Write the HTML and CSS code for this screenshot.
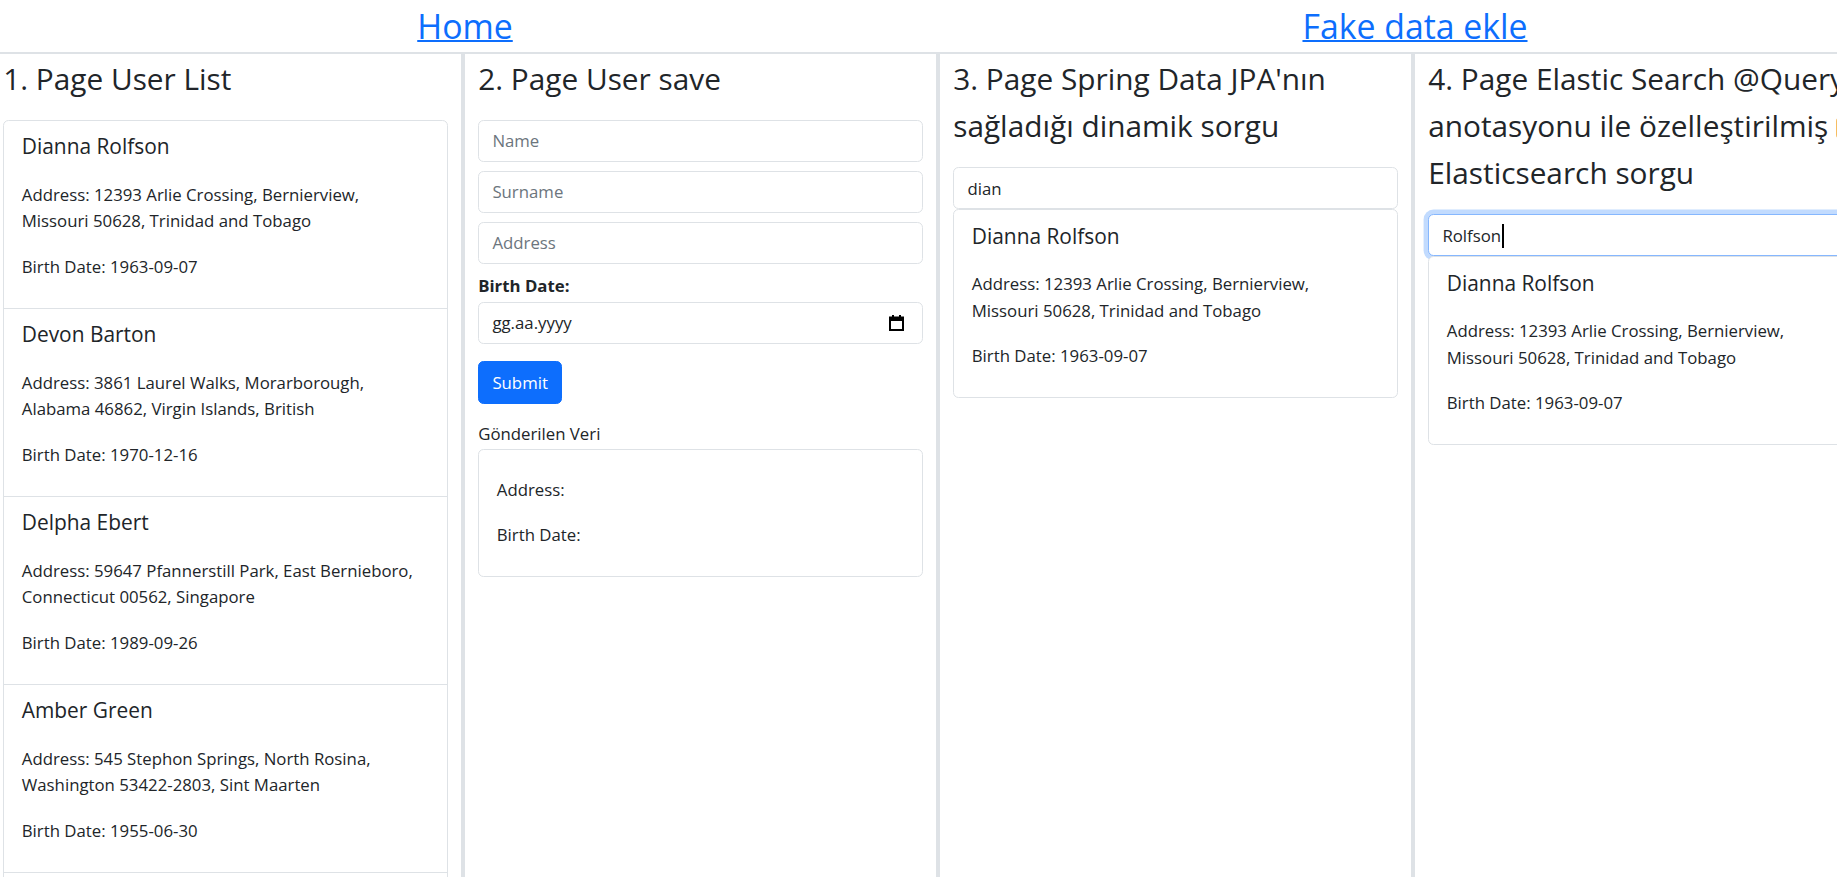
FILE: index.html
```html
<!DOCTYPE html>
<html lang="tr">
<head>
<meta charset="utf-8">
<title>Users</title>
<link rel="stylesheet" href="styles.css">
</head>
<body>
<div class="page">
  <nav class="topnav">
    <div class="topnav-cell"><a href="#" class="topnav-link">Home</a></div>
    <div class="topnav-cell"><a href="#" class="topnav-link">Fake data ekle</a></div>
  </nav>

  <main class="columns">
    <section class="col">
      <p class="col-title">1. Page User List</p>
      <div class="card">
        <div class="item">
          <h5 class="item-name">Dianna Rolfson</h5>
          <p class="item-text">Address: 12393 Arlie Crossing, Bernierview,<br>Missouri 50628, Trinidad and Tobago</p>
          <p class="item-text">Birth Date: 1963-09-07</p>
        </div>
        <div class="item">
          <h5 class="item-name">Devon Barton</h5>
          <p class="item-text">Address: 3861 Laurel Walks, Morarborough,<br>Alabama 46862, Virgin Islands, British</p>
          <p class="item-text">Birth Date: 1970-12-16</p>
        </div>
        <div class="item">
          <h5 class="item-name">Delpha Ebert</h5>
          <p class="item-text">Address: 59647 Pfannerstill Park, East Bernieboro,<br>Connecticut 00562, Singapore</p>
          <p class="item-text">Birth Date: 1989-09-26</p>
        </div>
        <div class="item">
          <h5 class="item-name">Amber Green</h5>
          <p class="item-text">Address: 545 Stephon Springs, North Rosina,<br>Washington 53422-2803, Sint Maarten</p>
          <p class="item-text">Birth Date: 1955-06-30</p>
        </div>
        <div class="item item-more" aria-hidden="true"></div>
      </div>
    </section>

    <section class="col">
      <p class="col-title">2. Page User save</p>
      <form class="save-form">
        <input class="field" type="text" placeholder="Name">
        <input class="field" type="text" placeholder="Surname">
        <input class="field" type="text" placeholder="Address">
        <label class="field-label">Birth Date:</label>
        <div class="field date-field">
          <span class="date-text">gg.aa.yyyy</span>
          <svg class="cal-icon" width="15" height="16" viewBox="0 0 15 16" aria-hidden="true">
            <rect x="3" y="0" width="2" height="3" fill="#000"/>
            <rect x="10" y="0" width="2" height="3" fill="#000"/>
            <rect x="1" y="2.5" width="13" height="12.5" fill="none" stroke="#000" stroke-width="2"/>
            <rect x="1" y="2" width="13" height="4" fill="#000"/>
          </svg>
        </div>
        <div class="btn-row"><button type="button" class="btn">Submit</button></div>
      </form>
      <p class="sent-label">Gönderilen Veri</p>
      <div class="card sent-box">
        <p class="item-text">Address:</p>
        <p class="item-text">Birth Date:</p>
      </div>
    </section>

    <section class="col">
      <p class="col-title">3. Page Spring Data JPA'nın<br>sağladığı dinamik sorgu</p>
      <input class="field search" type="text" value="dian">
      <div class="card">
        <div class="item">
          <h5 class="item-name">Dianna Rolfson</h5>
          <p class="item-text">Address: 12393 Arlie Crossing, Bernierview,<br>Missouri 50628, Trinidad and Tobago</p>
          <p class="item-text">Birth Date: 1963-09-07</p>
        </div>
      </div>
    </section>

    <section class="col">
      <p class="col-title">4. Page Elastic Search @Query<br>anotasyonu ile özelleştirilmiş <span class="title-mark" aria-hidden="true"></span><br>Elasticsearch sorgu</p>
      <div class="field search is-focus" role="textbox">Rolfson<span class="caret"></span></div>
      <div class="card">
        <div class="item">
          <h5 class="item-name">Dianna Rolfson</h5>
          <p class="item-text">Address: 12393 Arlie Crossing, Bernierview,<br>Missouri 50628, Trinidad and Tobago</p>
          <p class="item-text">Birth Date: 1963-09-07</p>
        </div>
      </div>
    </section>
  </main>
</div>
</body>
</html>
```
FILE: styles.css
```css
html, body {
  margin: 0;
  padding: 0;
  overflow: hidden;
  background: #fff;
}

body {
  font-family: "Open Sans", "Noto Sans", sans-serif;
  font-size: 16.8px;
  line-height: 26.4px;
  color: #212529;
}

.page {
  width: 1900px;
  margin-left: -10px;
}

/* top navigation */
.topnav {
  display: grid;
  grid-template-columns: 1fr 1fr;
  height: 51px;
  padding-top: 1px;
  border-bottom: 2px solid #dee2e6;
  font-size: 33.8px;
  line-height: 51px;
}

.topnav-cell {
  text-align: center;
}

.topnav-link {
  color: #0d6efd;
  text-decoration: underline;
  text-decoration-thickness: 2px;
}

/* columns */
.columns {
  display: grid;
  grid-template-columns: repeat(4, 475px);
  height: 823px;
  overflow: hidden;
}

.col {
  box-sizing: border-box;
  padding: 1px 13.2px 0;
  border-right: 4px solid #dee2e6;
  min-width: 0;
}

.col-title {
  margin: 0 0 17.6px;
  font-size: 29.8px;
  line-height: 47.2px;
  font-weight: 400;
  white-space: nowrap;
}

.title-mark {
  display: inline-block;
  width: 30px;
  height: 20px;
  border-radius: 3px;
  background: #f6bd62;
  vertical-align: -1px;
}

/* cards / list items */
.card {
  border: 1px solid #dee2e6;
  border-radius: 5.5px;
  background: #fff;
}

.item {
  padding: 12.7px 17.6px 8.4px;
}

.item + .item {
  border-top: 1px solid #dee2e6;
}

.item-more {
  height: 160px;
}

.item-name {
  margin: 0 0 21.9px;
  font-size: 20.9px;
  line-height: 26.4px;
  font-weight: 400;
}

.item-text {
  margin: 0 0 19.2px;
  white-space: nowrap;
}

/* form */
.save-form {
  margin: 0;
}

.field {
  display: block;
  box-sizing: border-box;
  width: 100%;
  height: 42.2px;
  margin: 0 0 8.8px;
  padding: 6.6px 13.2px;
  border: 1px solid #dee2e6;
  border-radius: 5.5px;
  background: #fff;
  font-family: inherit;
  font-size: 16.8px;
  line-height: 27px;
  color: #212529;
  outline: none;
}

.field::placeholder {
  color: #6c757d;
  opacity: 1;
}

.field-label {
  display: block;
  margin-bottom: 2.4px;
  font-weight: 700;
}

.date-field {
  display: flex;
  align-items: center;
  justify-content: space-between;
  margin-bottom: 17.6px;
}

.cal-icon {
  margin-right: 5px;
  flex: none;
}

.btn-row {
  margin-bottom: 17.6px;
}

.btn {
  display: inline-block;
  box-sizing: border-box;
  height: 42.2px;
  padding: 6.6px 13.2px;
  border: 1px solid #0d6efd;
  border-radius: 5.5px;
  background: #0d6efd;
  color: #fff;
  font-family: inherit;
  font-size: 16.8px;
  line-height: 27px;
}

.sent-label {
  margin: 0 0 1.6px;
}

.sent-box {
  padding: 26.7px 17.6px 8.5px;
}

/* search inputs */
.search {
  margin-bottom: 0;
}

.is-focus {
  border-color: #86b7fe;
  box-shadow: 0 0 0 4.4px rgba(13, 110, 253, 0.25);
  white-space: nowrap;
}

.caret {
  display: inline-block;
  width: 2px;
  height: 24px;
  margin-left: 1px;
  background: #000;
  vertical-align: -6px;
}
```
